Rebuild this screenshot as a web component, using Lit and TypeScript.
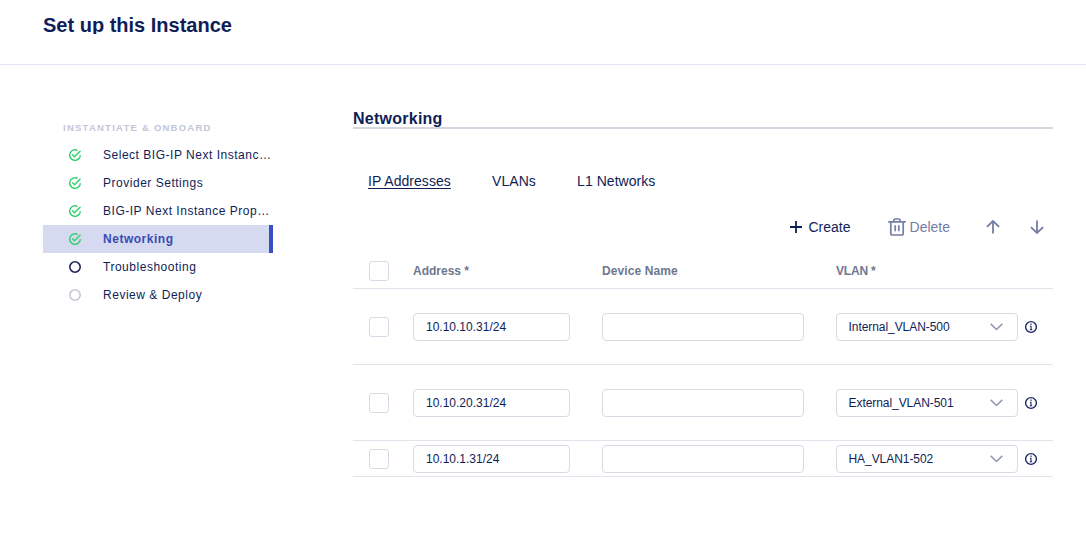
import { LitElement, html, css, svg, nothing } from "lit";
import { customElement, property } from "lit/decorators.js";
import { classMap } from "lit/directives/class-map.js";

type StepState = "done" | "open" | "pending";

interface Step {
  label: string;
  state: StepState;
  active?: boolean;
}

interface AddressRow {
  address: string;
  device: string;
  vlan: string;
  compact?: boolean;
}

const STEPS: Step[] = [
  { label: "Select BIG-IP Next Instanc…", state: "done" },
  { label: "Provider Settings", state: "done" },
  { label: "BIG-IP Next Instance Prop…", state: "done" },
  { label: "Networking", state: "done", active: true },
  { label: "Troubleshooting", state: "open" },
  { label: "Review & Deploy", state: "pending" },
];

const ROWS: AddressRow[] = [
  { address: "10.10.10.31/24", device: "", vlan: "Internal_VLAN-500" },
  { address: "10.10.20.31/24", device: "", vlan: "External_VLAN-501" },
  { address: "10.10.1.31/24", device: "", vlan: "HA_VLAN1-502", compact: true },
];

@customElement("step-nav")
class StepNav extends LitElement {
  @property({ attribute: false }) steps: Step[] = [];

  static styles = css`
    :host {
      display: block;
      width: 230px;
    }
    .title {
      padding-left: 20px;
      height: 20px;
      line-height: 13px;
      font-size: 9.5px;
      font-weight: 700;
      letter-spacing: 1.24px;
      color: #c3c5d8;
      white-space: nowrap;
    }
    .step {
      display: flex;
      align-items: center;
      box-sizing: border-box;
      height: 28px;
      padding-left: 25px;
      gap: 21px;
      font-size: 12px;
      letter-spacing: 0.52px;
      white-space: nowrap;
      border-right: 4px solid transparent;
    }
    .step.active {
      background: #d6daf0;
      border-right-color: #3a4fc4;
      color: #3a4bb5;
      font-weight: 700;
    }
    svg {
      display: block;
      flex: none;
      fill: none;
    }
    .done {
      stroke: #2fcf6b;
    }
    .open {
      stroke: #1b2559;
    }
    .pending {
      stroke: #c6c8d8;
    }
  `;

  private icon(state: StepState) {
    const shape =
      state === "done"
        ? svg`<path d="M12.3 7.2A5.3 5.3 0 1 1 9.6 2.4" stroke-width="1.4"/><path d="M4.3 6.4L6.5 8.7L12.5 2.7" stroke-width="1.4"/>`
        : svg`<circle cx="7" cy="7" r="5.2" stroke-width="1.6"/>`;
    return html`<svg class=${state} width="14" height="14" viewBox="0 0 14 14">${shape}</svg>`;
  }

  render() {
    return html`
      <div class="title">INSTANTIATE &amp; ONBOARD</div>
      ${this.steps.map(
        (s) => html`<div class=${classMap({ step: true, active: !!s.active })}>
          ${this.icon(s.state)}<span>${s.label}</span>
        </div>`
      )}
    `;
  }
}

@customElement("address-table")
class AddressTable extends LitElement {
  @property({ attribute: false }) rows: AddressRow[] = [];

  static styles = css`
    :host {
      display: block;
      font-size: 12px;
    }
    .row {
      display: grid;
      grid-template-columns: 20px 24px 157px 32px 202px 32px 182px 6px 14px;
      align-items: center;
      box-sizing: border-box;
      height: 76px;
      padding-left: 16px;
      border-bottom: 1px solid #e3e3ee;
    }
    .head {
      height: 36px;
      color: #6f7890;
      font-weight: 700;
    }
    .compact {
      height: 36px;
    }
    .c2 {
      grid-column: 3;
    }
    .c3 {
      grid-column: 5;
    }
    .c4 {
      grid-column: 7;
    }
    .c5 {
      grid-column: 9;
    }
    .head .c3 {
      letter-spacing: 0.1px;
    }
    .head .c4 {
      letter-spacing: -0.2px;
    }
    .check {
      box-sizing: border-box;
      width: 20px;
      height: 20px;
      border: 1px solid #d9d9e6;
      border-radius: 3px;
    }
    .field {
      display: flex;
      align-items: center;
      justify-content: space-between;
      box-sizing: border-box;
      height: 28px;
      padding: 0 14px 0 12px;
      border: 1px solid #d9d9e4;
      border-radius: 4px;
      white-space: nowrap;
    }
    .select {
      padding-left: 11.5px;
      letter-spacing: -0.06px;
    }
    svg {
      display: block;
      fill: none;
    }
  `;

  render() {
    return html`
      <div class="row head">
        <span class="check"></span>
        <span class="c2">Address *</span>
        <span class="c3">Device Name</span>
        <span class="c4">VLAN *</span>
      </div>
      ${this.rows.map(
        (r) => html`<div class=${classMap({ row: true, compact: !!r.compact })}>
          <span class="check"></span>
          <div class="field c2">${r.address}</div>
          <div class="field c3">${r.device || nothing}</div>
          <div class="field select c4">
            <span>${r.vlan}</span>
            <svg width="13" height="8" viewBox="0 0 13 8">
              <path d="M0.7 0.9L6.5 6.5L12.3 0.9" stroke="#9499b8" stroke-width="1.6" />
            </svg>
          </div>
          <svg class="c5" width="14" height="14" viewBox="0 0 14 14">
            <circle cx="7" cy="7" r="5.4" stroke="#1b2763" stroke-width="1.4" />
            <path d="M7 3.6V4.9M6 6.3H7V9.4M5.8 9.7H8.2" stroke="#1b2763" stroke-width="1.1" />
          </svg>
        </div>`
      )}
    `;
  }
}

@customElement("app-root")
class AppRoot extends LitElement {
  static styles = css`
    :host {
      display: block;
      width: 1086px;
      height: 552px;
      overflow: hidden;
      background: #fff;
      color: #0f1e57;
      font-family: "Liberation Sans", Arial, sans-serif;
    }
    header {
      box-sizing: border-box;
      height: 65px;
      padding: 14px 0 0 43px;
      border-bottom: 1px solid #e3e4f1;
    }
    h1 {
      margin: 0;
      height: 20px;
      line-height: 22px;
      overflow: hidden;
      font-size: 20px;
      font-weight: 700;
    }
    .body {
      display: flex;
      gap: 80px;
      padding-left: 43px;
    }
    step-nav {
      padding-top: 56px;
    }
    main {
      width: 700px;
      padding-top: 43px;
    }
    h2 {
      margin: 0;
      box-sizing: border-box;
      height: 21px;
      line-height: 21px;
      font-size: 16px;
      font-weight: 700;
      letter-spacing: 0.25px;
      border-bottom: 2px solid #d5d7e0;
    }
    .tabs {
      display: flex;
      gap: 41.2px;
      padding: 43px 0 0 15px;
      font-size: 14px;
      line-height: 18px;
      letter-spacing: 0.05px;
    }
    .current {
      text-decoration: underline;
      text-underline-offset: 2px;
      text-decoration-thickness: 1px;
    }
    .tools {
      display: flex;
      align-items: center;
      justify-content: flex-end;
      height: 24px;
      margin-top: 25px;
      padding: 0 9px 0 0;
      font-size: 14px;
    }
    .tool {
      display: flex;
      align-items: center;
    }
    .create {
      gap: 6px;
      margin-right: 37px;
    }
    .delete {
      gap: 4px;
      margin-right: 36px;
    }
    .up {
      margin-right: 30px;
    }
    .muted {
      color: #757da5;
    }
    svg {
      display: block;
      fill: none;
      stroke: currentColor;
    }
    address-table {
      margin-top: 14px;
    }
  `;

  render() {
    return html`
      <header><h1>Set up this Instance</h1></header>
      <div class="body">
        <step-nav .steps=${STEPS}></step-nav>
        <main>
          <h2>Networking</h2>
          <div class="tabs">
            <span class="current">IP Addresses</span>
            <span>VLANs</span>
            <span>L1 Networks</span>
          </div>
          <div class="tools">
            <div class="tool create">
              <svg width="14" height="14" viewBox="0 0 14 14">
                <path d="M1 7H13M7 1V13" stroke-width="1.8" />
              </svg>
              <span>Create</span>
            </div>
            <div class="tool delete muted">
              <svg width="18" height="18" viewBox="0 0 18 18" stroke-width="1.7">
                <path d="M0.2 3.8H17.8M5.9 3.6V2.2Q5.9 1 7.1 1H10.9Q12.1 1 12.1 2.2V3.6" />
                <path d="M2.8 4V15.4Q2.8 17 4.5 17H13.5Q15.2 17 15.2 15.4V4M7.2 7.2V13.2M10.8 7.2V13.2" />
              </svg>
              <span>Delete</span>
            </div>
            <svg class="up muted" width="14" height="16" viewBox="0 0 14 16" stroke-width="1.8">
              <path d="M7 14.6V2.4M0.9 7.9L7 2L13.1 7.9" />
            </svg>
            <svg class="muted" width="14" height="16" viewBox="0 0 14 16" stroke-width="1.8">
              <path d="M7 1.4V13.6M0.9 8.1L7 14L13.1 8.1" />
            </svg>
          </div>
          <address-table .rows=${ROWS}></address-table>
        </main>
      </div>
    `;
  }
}
